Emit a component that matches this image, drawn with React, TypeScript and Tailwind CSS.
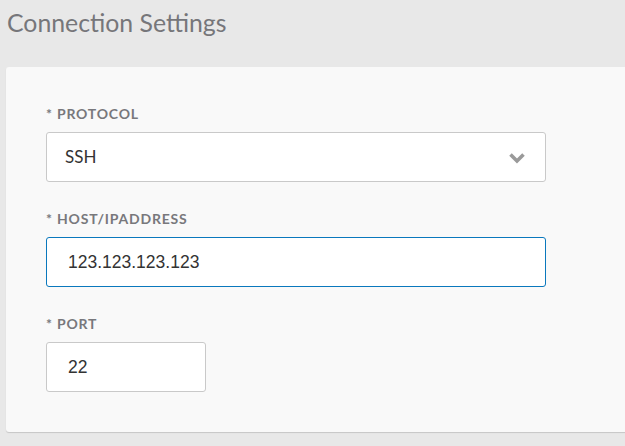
const LABEL = 'block text-[14px] font-bold uppercase tracking-[0.8px] text-[#78787c] mb-[10px] leading-[16px]'
const FIELD = 'h-[50px] rounded-[3px] bg-white text-[#333] outline-none'
const INPUT = `${FIELD} block px-[21px] text-[17.5px] font-['Liberation_Sans',Arial,sans-serif]`

export default function App() {
  return (
    <div className="min-h-[446px] bg-[#e8e8e8] font-['Lato',sans-serif] overflow-hidden">
      <h1 className="pl-[7px] pt-[8px] h-[67px] text-[24.8px] leading-[30px] text-[#76767a]">
        Connection Settings
      </h1>

      <div className="ml-[6px] w-[640px] rounded-[3px] bg-[#f9f9f9] pl-[40px] pt-[39px] pb-[40px] shadow-[0_1px_1px_rgba(0,0,0,0.15)]">
        {/* Protocol */}
        <div>
          <label className={LABEL}>* Protocol</label>
          <div className="relative w-[500px]">
            <div className={`${FIELD} flex items-center border border-[#c9c9c9] px-[18px] text-[17px]`}>SSH</div>
            <svg
              className="absolute right-[20px] top-[20px]"
              width="18"
              height="12"
              viewBox="0 0 18 12"
              fill="none"
            >
              <polyline points="2.5,2.5 9,9 15.5,2.5" stroke="#9a9a9a" strokeWidth="3.6" />
            </svg>
          </div>
        </div>

        <div className="mt-[29px]">
          <label className={LABEL}>* Host/IPaddress</label>
          <input defaultValue="123.123.123.123" className={`${INPUT} w-[500px] border border-[#0a78bd]`} />
        </div>

        <div className="mt-[29px]">
          <label className={LABEL}>* Port</label>
          <input defaultValue="22" className={`${INPUT} w-[160px] border border-[#c9c9c9]`} />
        </div>
      </div>
    </div>
  )
}
